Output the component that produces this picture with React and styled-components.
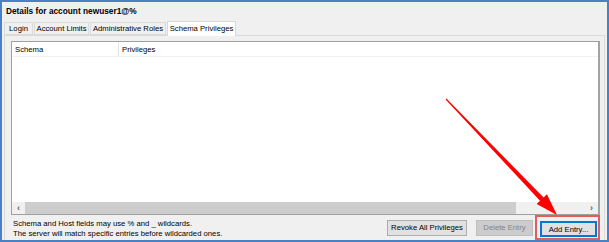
import React from "react"
import styled, { createGlobalStyle } from "styled-components"

const Global = createGlobalStyle`
  html, body {
    margin: 0;
    padding: 0;
    background: #ffffff;
  }
  * {
    box-sizing: border-box;
  }
`

const Frame = styled.div`
  position: relative;
  width: 609px;
  height: 242px;
  border: 2px solid #4a80c4;
  background: #f0f0f0;
  display: flex;
  flex-direction: column;
  overflow: hidden;
  font-family: "Liberation Sans", Arial, sans-serif;
  font-size: 7.7px;
  color: #000;
`

const Title = styled.div`
  padding: 3px 4px 0;
  line-height: 12px;
  font-weight: bold;
  font-size: 8.3px;
`

const TabRow = styled.div`
  display: flex;
  align-items: flex-end;
  height: 14px;
  margin-top: 4px;
  padding-left: 2px;
  position: relative;
  z-index: 1;
`

const Tab = styled.div`
  height: ${p => (p.active ? "15px" : "13px")};
  margin-bottom: ${p => (p.active ? "-1px" : "0")};
  width: ${p => p.w}px;
  margin-right: ${p => (p.active ? "0" : "1px")};
  border: 1px solid ${p => (p.active ? "#d9d9d9" : "#dadada")};
  border-bottom: ${p => (p.active ? "none" : "1px solid #dadada")};
  background: ${p => (p.active ? "#ffffff" : "#f0f0f0")};
  display: flex;
  align-items: center;
  justify-content: center;
  line-height: 12px;
  white-space: nowrap;
`

const Pane = styled.div`
  flex: 1;
  margin: 0 2px;
  border: 1px solid #dadada;
  border-bottom: none;
  padding: 5px 4px 0 6px;
  display: flex;
  flex-direction: column;
`

const ListBox = styled.div`
  height: 174px;
  border: 1px solid #a0a0a0;
  border-right: 2px solid #a3a3a3;
  background: #ffffff;
  display: flex;
  flex-direction: column;
`

const Header = styled.div`
  display: flex;
  height: 15px;
  border-bottom: 1px solid #f2f2f2;
`

const HeadCell = styled.div`
  width: ${p => (p.w ? p.w + "px" : "auto")};
  flex: ${p => (p.w ? "none" : "1")};
  padding-left: 3px;
  line-height: 15px;
  border-right: ${p => (p.w ? "1px solid #e5e5e5" : "none")};
`

const Body = styled.div`
  flex: 1;
`

const HScroll = styled.div`
  height: 12px;
  display: flex;
  background: #f0f0f0;
`

const ScrollArrow = styled.div`
  width: 13px;
  display: flex;
  align-items: center;
  justify-content: center;
  font-size: 9px;
  font-weight: bold;
  color: #606060;
`

const Track = styled.div`
  flex: 1;
  display: flex;
  align-items: stretch;
`

const Thumb = styled.div`
  width: 491px;
  background: #cdcdcd;
`

const Footer = styled.div`
  height: 25px;
  display: flex;
  align-items: center;
  justify-content: space-between;
  padding-left: 2px;
`

const Hint = styled.div`
  line-height: 10px;
  padding-top: 2px;
`

const Buttons = styled.div`
  display: flex;
  align-items: center;
  height: 100%;
`

const Button = styled.div`
  width: ${p => p.w}px;
  height: 16px;
  margin-right: ${p => p.mr || 0}px;
  display: flex;
  align-items: center;
  justify-content: center;
  background: ${p => (p.disabled ? "#cccccc" : "#e1e1e1")};
  border: 1px solid ${p => (p.focused ? "#0078d7" : p.disabled ? "#bfbfbf" : "#adadad")};
  box-shadow: ${p => (p.focused ? "inset 0 0 0 1px #0078d7" : "none")};
  color: ${p => (p.disabled ? "#838383" : "#000")};
  white-space: nowrap;
`

const Highlight = styled.div`
  height: 100%;
  display: flex;
  align-items: center;
  padding: 3px 1px 0 3px;
  border: 2px solid #e35d5f;
`

const Overlay = styled.svg`
  position: absolute;
  left: -2px;
  top: -2px;
  pointer-events: none;
`

const tabs = [
  { label: "Login", w: 29 },
  { label: "Account Limits", w: 55 },
  { label: "Administrative Roles", w: 76 },
  { label: "Schema Privileges", w: 69, active: true }
]

export default function App() {
  return (
    <>
      <Global />
      <Frame>
        <Title>Details for account newuser1@%</Title>
        <TabRow>
          {tabs.map(t => (
            <Tab key={t.label} w={t.w} active={t.active}>
              {t.label}
            </Tab>
          ))}
        </TabRow>
        <Pane>
          <ListBox>
            <Header>
              <HeadCell w={107}>Schema</HeadCell>
              <HeadCell>Privileges</HeadCell>
            </Header>
            <Body />
            <HScroll>
              <ScrollArrow>&lsaquo;</ScrollArrow>
              <Track>
                <Thumb />
              </Track>
              <ScrollArrow>&rsaquo;</ScrollArrow>
            </HScroll>
          </ListBox>
          <Footer>
            <Hint>
              Schema and Host fields may use % and _ wildcards.
              <br />
              The server will match specific entries before wildcarded ones.
            </Hint>
            <Buttons>
              <Button w={80} mr={9}>Revoke All Privileges</Button>
              <Button w={57} mr={2} disabled>Delete Entry</Button>
              <Highlight>
                <Button w={57} focused>Add Entry...</Button>
              </Highlight>
            </Buttons>
          </Footer>
        </Pane>
        <Overlay width="609" height="242" viewBox="0 0 609 242">
          <polygon
            fill="#ff0000"
            points="446.4,98.6 543.6,197.4 546.9,194.3 557,215 536.7,203.9 540,200.8 445.6,99.4"
          />
        </Overlay>
      </Frame>
    </>
  )
}
